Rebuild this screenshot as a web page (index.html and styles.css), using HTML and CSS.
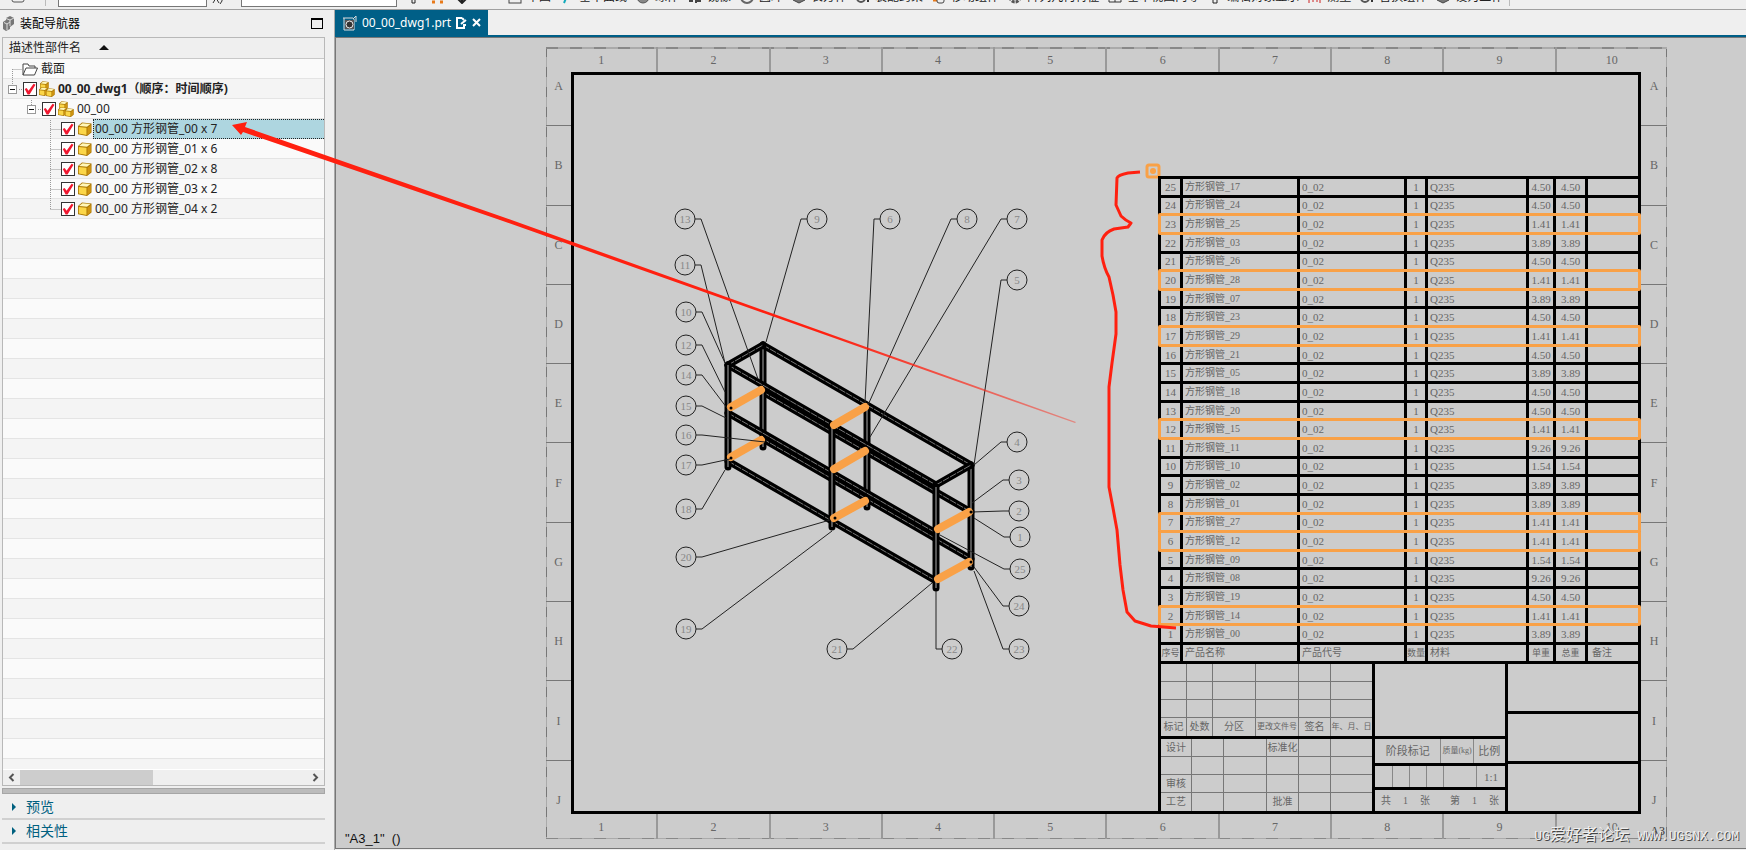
FILE: index.html
```html
<!DOCTYPE html>
<html lang="zh-CN">
<head>
    <meta charset="UTF-8">
    <meta name="viewport" content="width=device-width, initial-scale=1.0">
    <title>00_00_dwg1.prt</title>
    <link rel="stylesheet" href="styles.css">
</head>
<body>
    <svg width="0" height="0" class="defs">
        <defs>
            <symbol id="cube" viewBox="0 0 14 14">
                <path d="M0 4 4 0.500l9.500 1v9l-4.500 3.500-9-1.700z" fill="#a87400"/>
                <path d="M1 4 4.500 1.200l8 .9-3.500 2.700z" fill="#fff6b8"/>
                <path d="M.8 4.900 8.500 5.700v7.300l-7.700-1.400z" fill="#fbd648"/>
                <path d="M9.400 5.700 12.900 3v7l-3.500 2.900z" fill="#cf9410"/>
            </symbol>
            <symbol id="asm" viewBox="0 0 16 16">
                <use href="#cube" x="1" y="0" width="9" height="9"/>
                <use href="#cube" x="0" y="6" width="9" height="9"/>
                <use href="#cube" x="7" y="7" width="9" height="9"/>
            </symbol>
        </defs>
    </svg>

    <div class="toolbar">
        <svg class="tool-icon first" viewBox="0 0 14 14"><rect x="1" y="1" width="12" height="12" rx="2" fill="none" stroke="#555"/></svg>
        <span class="sep"></span>
        <select class="filter" aria-label="类型过滤器"><option></option></select>
        <svg class="tool-icon" viewBox="0 0 14 14"><path d="M1 13 4 8l3 5M10 8v3l-2 3" fill="none" stroke="#333"/></svg>
        <select class="scope" aria-label="选择范围"><option>整个装配</option></select>
        <svg class="tool-icon" viewBox="0 0 14 14"><path d="M5 2v11h3V2" fill="none" stroke="#222"/></svg>
        <svg class="tool-icon" viewBox="0 0 14 14"><path d="M1 12h3M9 12h3" stroke="#e87a1a" stroke-width="3"/></svg>
        <svg class="tool-icon" viewBox="0 0 14 14"><path d="M7 2v11M3 9l4 4 4-4" fill="none" stroke="#222" stroke-width="2"/></svg>
        <div class="tools" id="tools"></div>
        <span class="sep"></span>
    </div>

    <div class="main">
        <aside class="navigator">
            <div class="nav-title">
                <svg width="13" height="15" viewBox="0 0 13 15"><path d="M1 6 4 4V2l4-2 4 2v6l-4 3v2l-4 2-3-2z" fill="#777"/><path d="M2 6.500 5 8l3-2M5 8v6M4 2.500 8 4l4-2M8 4v6" fill="none" stroke="#ddd"/></svg>
                <span>装配导航器</span>
                <button class="maximize" aria-label="最大化"></button>
            </div>
            <div class="tree">
                <div class="tree-head">描述性部件名 <i class="sort"></i></div>
                <div class="rows">
                    <svg class="branches" width="70" height="160">
                        <path d="M9.500 10v15M9.500 10.500H19M16 30.500h4M28.500 41v5M35 50.500h4M47.500 61v90M47.500 70.500H58M47.500 90.500H58M47.500 110.500H58M47.500 130.500H58M47.500 150.500H58"/>
                    </svg>
                    <div class="row folder">
                        <svg width="16" height="13" viewBox="0 0 16 13"><path d="M1 12V1h5l1 2h6v2M1 12l3-7h11.500l-3 7z" fill="#fff" stroke="#444"/></svg>
                        <span class="label">截面</span>
                    </div>
                    <div class="row level1">
                        <button class="expander" aria-label="折叠"></button>
                        <input type="checkbox" id="p0" checked>
                        <svg width="16" height="16"><use href="#asm"/></svg>
                        <label class="label" for="p0"><b>00_00_dwg1（顺序：时间顺序)</b></label>
                    </div>
                    <div class="row level2">
                        <button class="expander" aria-label="折叠"></button>
                        <input type="checkbox" id="p1" checked>
                        <svg width="16" height="16"><use href="#asm"/></svg>
                        <label class="label" for="p1">00_00</label>
                    </div>
                    <div class="row level3 selected">
                        <input type="checkbox" id="p2" checked>
                        <svg width="14" height="14"><use href="#cube"/></svg>
                        <label class="label" for="p2">00_00 方形钢管_00 x 7</label>
                    </div>
                    <div class="row level3">
                        <input type="checkbox" id="p3" checked>
                        <svg width="14" height="14"><use href="#cube"/></svg>
                        <label class="label" for="p3">00_00 方形钢管_01 x 6</label>
                    </div>
                    <div class="row level3">
                        <input type="checkbox" id="p4" checked>
                        <svg width="14" height="14"><use href="#cube"/></svg>
                        <label class="label" for="p4">00_00 方形钢管_02 x 8</label>
                    </div>
                    <div class="row level3">
                        <input type="checkbox" id="p5" checked>
                        <svg width="14" height="14"><use href="#cube"/></svg>
                        <label class="label" for="p5">00_00 方形钢管_03 x 2</label>
                    </div>
                    <div class="row level3">
                        <input type="checkbox" id="p6" checked>
                        <svg width="14" height="14"><use href="#cube"/></svg>
                        <label class="label" for="p6">00_00 方形钢管_04 x 2</label>
                    </div>
                </div>
                <div class="scrollbar">
                    <svg width="17" height="15" viewBox="0 0 17 15"><path d="M10.500 4 7 7.500l3.500 3.500" fill="none" stroke="#555" stroke-width="2"/></svg>
                    <div class="track"><div class="thumb"></div></div>
                    <svg width="17" height="15" viewBox="0 0 17 15"><path d="M6.500 4 10 7.500 6.500 11" fill="none" stroke="#555" stroke-width="2"/></svg>
                </div>
            </div>
            <div class="splitter"></div>
            <button class="section">预览</button>
            <button class="section">相关性</button>
        </aside>

        <section class="workspace">
            <div class="tabs">
                <div class="tab">
                    <svg width="15" height="16" viewBox="0 0 15 16"><path d="M1 3h10M2 3v12h10V4M11 4l3-3v6" fill="none" stroke="#ddd"/><rect x="3" y="5" width="9" height="9" fill="#555"/><circle cx="7.500" cy="9.500" r="3.500" fill="#333" stroke="#eee"/></svg>
                    <span>00_00_dwg1.prt</span>
                    <svg width="11" height="12" viewBox="0 0 11 12"><path d="M6 1H1v10h7V8M6 1l2 2M5 7l5-4M7 8h3" fill="none" stroke="#fff" stroke-width="2"/></svg>
                    <button class="close" aria-label="关闭"><svg width="9" height="9" viewBox="0 0 9 9"><path d="M1 1l7 7M8 1 1 8" stroke="#fff" stroke-width="2"/></svg></button>
                </div>
            </div>
            <div class="canvas">
                <div class="sheet">
                    <div class="ruler-h"><span>1</span><span>2</span><span>3</span><span>4</span><span>5</span><span>6</span><span>7</span><span>8</span><span>9</span><span>10</span></div>
                    <div class="sheet-body">
                        <div class="ruler-v"><span>A</span><span>B</span><span>C</span><span>D</span><span>E</span><span>F</span><span>G</span><span>H</span><span>I</span><span>J</span></div>
                        <div class="frame">
                            <svg class="model" width="584" height="736" viewBox="574 74 584 736">
                                <g id="rails"></g>
                                <g class="cross">
                                    <path d="M731 406 761 389M731 456 761 439M834 424 865 406M834 468 865 450M834 517 865 500M938 528 969 511M938 578 969 561"/>
                                </g>
                                <g class="pins">
                                    <circle cx="731" cy="407" r="1.500"/><circle cx="731" cy="457" r="1.500"/><circle cx="835" cy="517" r="1.500"/><circle cx="971" cy="511" r="1.500"/><circle cx="971" cy="561" r="1.500"/>
                                </g>
                                <g id="balloons"></g>
                                <rect class="anchor" x="1147" y="164" width="12" height="12" rx="2"/>
                                <circle cx="1153" cy="170" r="3" fill="#f9a147"/>
                            </svg>
                            <div class="tables">
                                <table class="bom">
                                    <colgroup><col class="c1"><col class="c2"><col class="c3"><col class="c4"><col class="c5"><col class="c6"><col class="c7"><col></colgroup>
                                    <tbody id="bom">
                                        <tr><th>序号</th><th class="name">产品名称</th><th class="code">产品代号</th><th>数量</th><th class="mat">材料</th><th>单重</th><th>总重</th><th class="note">备注</th></tr>
                                    </tbody>
                                </table>
                                <div class="title-block">
                                    <div class="tb-left">
                                        <div class="grid changes">
                                            <i></i><i></i><i></i><i></i><i></i><i></i>
                                            <i></i><i></i><i></i><i></i><i></i><i></i>
                                            <i></i><i></i><i></i><i></i><i></i><i></i>
                                            <span>标记</span><span>处数</span><span>分区</span><span class="small">更改文件号</span><span>签名</span><span class="small">年、月、日</span>
                                        </div>
                                        <div class="grid signs">
                                            <span>设计</span><i></i><i></i><span>标准化</span><i></i><i></i>
                                            <i></i><i></i><i></i><i></i><i></i><i></i>
                                            <span>审核</span><i></i><i></i><i></i><i></i><i></i>
                                            <span>工艺</span><i></i><i></i><span>批准</span><i></i><i></i>
                                        </div>
                                    </div>
                                    <div class="tb-mid">
                                        <div class="blank"></div>
                                        <div class="stage"><span>阶段标记</span><span class="small">质量(kg)</span><span>比例</span></div>
                                        <div class="scale"><i></i><i></i><i></i><i></i><i class="wide"></i><span>1:1</span></div>
                                        <div class="pages"><span>共</span><span>1</span><span>张</span><span class="gap">第</span><span>1</span><span>张</span></div>
                                    </div>
                                    <div class="tb-right"><div></div><div></div><div></div></div>
                                </div>
                            </div>
                        </div>
                        <div class="ruler-v right"><span>A</span><span>B</span><span>C</span><span>D</span><span>E</span><span>F</span><span>G</span><span>H</span><span>I</span><span>J</span></div>
                    </div>
                    <div class="ruler-h bottom"><span>1</span><span>2</span><span>3</span><span>4</span><span>5</span><span>6</span><span>7</span><span>8</span><span>9</span><span>10</span></div>
                    <span class="format">A3</span>
                </div>
                <span class="sheet-name">"A3_1"&nbsp; ()</span>
                <span class="watermark">UG<b>爱好者论坛</b> WWW.UGSNX.COM</span>
            </div>
        </section>
    </div>

    <!-- red marks over the whole window -->
    <svg class="marks" width="1200" height="650">
        <defs>
            <linearGradient id="fade" gradientUnits="userSpaceOnUse" x1="232" y1="0" x2="1075" y2="0">
                <stop offset="0.700" stop-color="#ff2010"/>
                <stop offset="1" stop-color="#ff2010" stop-opacity="0.400"/>
            </linearGradient>
        </defs>
        <path d="M232 125 247 122 245 127 500 216 1076 422 1075 423 500 220 243 132 241 135z" fill="url(#fade)"/>
        <path d="M1140 172 1128 173Q1118 175 1117 178L1116 205 1121 216Q1125 220 1131 223L1128 227 1114 229Q1105 232 1102 240V256Q1104 268 1109 277L1113 295 1116 312V334L1112 363 1109 387V487L1113 508 1117 530 1120 565 1123 590 1127 612 1135 621 1151 626 1176 628" fill="none" stroke="#ff2010" stroke-width="3" stroke-linejoin="round"/>
    </svg>

    <script>
        // toolbar
        var icons = {
            box: '<rect x="1" y="1" width="12" height="12" fill="none" stroke="#444"/>',
            line: '<path d="M4 13 9 1" stroke="#1ab" stroke-width="2"/>',
            ball: '<circle cx="7" cy="7" r="6" fill="#888" stroke="#555"/>',
            ring: '<circle cx="7" cy="7" r="6" fill="none" stroke="#666" stroke-width="2"/>',
            key: '<path d="M1 11h4M8 13V6h4v5H8" fill="none" stroke="#444" stroke-width="2"/>',
            gear: '<circle cx="7" cy="7" r="5" fill="none" stroke="#555" stroke-width="3" stroke-dasharray="3 1"/>',
            cube: '<path d="M1 3 7 0l6 3v7l-6 3-6-3z" fill="#777" stroke="#444"/>',
            chain: '<circle cx="5" cy="8" r="4" fill="none" stroke="#555" stroke-width="2"/><path d="M12 8v4" stroke="#333" stroke-width="2"/>',
            hand: '<path d="M1 10h4" stroke="#e87a1a" stroke-width="3"/><rect x="5" y="4" width="7" height="9" rx="2" fill="none" stroke="#444"/>',
            grid: '<path d="M1 1h12v11H1zM7 1v11" fill="none" stroke="#333"/>',
            up: '<path d="M7 1l5 7H9v5H5V8H2z" fill="none" stroke="#222"/>',
            dim: '<path d="M1 1v12M12 1v12M5 8v4M9 8v4" stroke="#c22"/>'
        };
        var tools = [
            ['box', '草图'], ['line', '基本曲线'], ['ball', '球体'], ['key', '镜像'], ['ring', '圆环'],
            ['cube', '长方体'], ['chain', '装配约束'], ['hand', '移动组件'], ['gear', '阵列几何特征'],
            ['grid', '基本视图向导'], ['up', '编辑对象显示'], ['dim', '测量'], ['chain', '替换组件'], ['cube', '设为工作']
        ];
        document.getElementById('tools').innerHTML = tools.map(function (t) {
            return '<button><svg width="14" height="14">' + icons[t[0]] + '</svg>' + t[1] + '</button>';
        }).join('');

        // parts list: number, suffix, weight
        var parts = [
            [25, '17', '4.50'], [24, '24', '4.50'], [23, '25', '1.41'], [22, '03', '3.89'], [21, '26', '4.50'],
            [20, '28', '1.41'], [19, '07', '3.89'], [18, '23', '4.50'], [17, '29', '1.41'], [16, '21', '4.50'],
            [15, '05', '3.89'], [14, '18', '4.50'], [13, '20', '4.50'], [12, '15', '1.41'], [11, '11', '9.26'],
            [10, '10', '1.54'], [9, '02', '3.89'], [8, '01', '3.89'], [7, '27', '1.41'], [6, '12', '1.41'],
            [5, '09', '1.54'], [4, '08', '9.26'], [3, '19', '4.50'], [2, '14', '1.41'], [1, '00', '3.89']
        ];
        document.getElementById('bom').insertAdjacentHTML('afterbegin', parts.map(function (p) {
            return '<tr' + (p[2] === '1.41' ? ' class="hit"' : '') + '><td>' + p[0] + '</td><td class="name">方形钢管_' + p[1] +
                '</td><td class="code">0_02</td><td>1</td><td class="mat">Q235</td><td>' + p[2] + '</td><td>' + p[2] + '</td><td></td></tr>';
        }).join(''));

        // square tubes of the rack, back to front
        var rails = [
            'M763 391 971 511', 'M763 438 971 558', 'M763 344V446', 'M867 405V506', 'M971 466V566',
            'M763 344 971 464', 'M728 412 936 532', 'M728 460 936 580', 'M728 364 936 484',
            'M728 364 763 344', 'M936 484 971 464', 'M728 364V466', 'M832 424V526', 'M936 486V587'
        ];
        document.getElementById('rails').innerHTML = rails.map(function (d) {
            return '<path class="tube" d="' + d + '"/><path class="' + (d.indexOf('V') > 0 ? 'face' : 'shine') + '" d="' + d + '"/>';
        }).join('');

        // balloons: number, centre, leader end, leader side
        var balloons = [
            [13, 685, 218, 758, 378, 1], [11, 685, 264, 725, 362, 1], [10, 686, 311, 725, 362, 1], [12, 686, 344, 725, 391, 1],
            [14, 686, 374, 727, 407, 1], [15, 686, 405, 726, 417, 1], [16, 686, 434, 765, 441, 1], [17, 686, 464, 730, 458, 1],
            [18, 686, 508, 725, 469, 1], [20, 686, 556, 830, 519, 1], [19, 686, 628, 832, 530, 1], [21, 837, 648, 932, 582, 1],
            [9, 817, 218, 766, 341, -1], [6, 890, 218, 865, 402, -1], [8, 967, 218, 868, 404, -1], [7, 1017, 218, 870, 436, -1],
            [5, 1017, 279, 974, 464, -1], [4, 1017, 441, 974, 464, -1], [3, 1019, 479, 972, 502, -1], [2, 1019, 510, 972, 511, -1],
            [1, 1020, 536, 974, 517, -1], [25, 1020, 568, 940, 534, -1], [24, 1019, 605, 974, 566, -1], [23, 1019, 648, 974, 570, -1],
            [22, 952, 648, 936, 590, -1]
        ];
        document.getElementById('balloons').innerHTML = balloons.map(function (b) {
            return '<circle cx="' + b[1] + '" cy="' + b[2] + '" r="10"/><path d="M' + (b[1] + 10 * b[5]) + ' ' + b[2] +
                'H' + (b[1] + 16 * b[5]) + 'L' + b[3] + ' ' + b[4] + '"/><text x="' + b[1] + '" y="' + (b[2] + 4) + '">' + b[0] + '</text>';
        }).join('');
    </script>
</body>
</html>
```
FILE: styles.css
```css
* {
    box-sizing: border-box;
}
body {
    margin: 0;
    height: 100vh;
    display: flex;
    flex-direction: column;
    position: relative;
    overflow: hidden;
    background: #efefef;
    color: #222;
    font: 12px/16px "Noto Sans", "Noto Sans CJK SC", sans-serif;
}
button {
    font: inherit;
    color: inherit;
    background: none;
    border: none;
    padding: 0;
}
.defs {
    position: absolute;
}

/* toolbar, scrolled up so that only its lower edge shows */
.toolbar {
    flex: none;
    height: 10px;
    overflow: hidden;
    border-bottom: 1px solid #a0a0a0;
    display: flex;
    align-items: flex-end;
}
.tool-icon {
    flex: none;
    width: 14px;
    height: 14px;
    margin: 0 5px 5px 5px;
}
.tool-icon.first {
    margin: 0 14px 6px 11px;
}
.sep {
    flex: none;
    width: 1px;
    height: 20px;
    margin: 0 6px 3px 6px;
    background: #bbb;
}
.toolbar select {
    flex: none;
    height: 24px;
    margin-bottom: 2px;
    border: 1px solid #777;
    background: #fff;
    appearance: none;
    font: inherit;
    color: #222;
    padding: 0 2px;
}
.filter {
    width: 149px;
    margin-left: 6px;
}
.scope {
    width: 156px;
    margin: 0 5px 0 10px;
}
.tools {
    display: flex;
    gap: 9px;
    margin-left: 34px;
}
.tools button {
    display: flex;
    align-items: center;
    gap: 5px;
    white-space: nowrap;
    margin-bottom: 4px;
}

.main {
    flex: 1;
    min-height: 0;
    display: flex;
}

/* assembly navigator */
.navigator {
    flex: none;
    width: 334px;
    padding: 0 9px 6px 2px;
    display: flex;
    flex-direction: column;
}
.nav-title {
    height: 27px;
    display: flex;
    align-items: center;
    gap: 5px;
    color: #000;
}
.maximize {
    width: 12px;
    height: 11px;
    border: 1px solid #000;
    border-top-width: 2px;
    margin: 0 2px 0 auto;
}
.tree {
    flex: 1;
    min-height: 0;
    border: 1px solid #b8b8b8;
    display: flex;
    flex-direction: column;
}
.tree-head {
    height: 21px;
    border-bottom: 1px solid #c8c8c8;
    padding-left: 6px;
    line-height: 20px;
}
.sort {
    display: inline-block;
    margin-left: 15px;
    border: 5px solid transparent;
    border-top: none;
    border-bottom-color: #111;
    vertical-align: 2px;
}
.rows {
    flex: 1;
    min-height: 0;
    position: relative;
    overflow: hidden;
    background: repeating-linear-gradient(#fafafa 0 19px, #e4e4e4 19px 20px, #f4f4f4 20px 39px, #e4e4e4 39px 40px);
}
.branches {
    position: absolute;
    left: 0;
    top: 0;
}
.branches path {
    fill: none;
    stroke: #999;
    stroke-dasharray: 1 1;
}
.row {
    position: relative;
    height: 20px;
    display: flex;
    align-items: center;
    gap: 2px;
}
.row svg {
    flex: none;
}
.label {
    flex: 1;
    padding-left: 1px;
    white-space: nowrap;
}
.folder {
    padding-left: 19px;
}
.level1 {
    padding-left: 5px;
}
.level2 {
    padding-left: 24px;
}
.level3 {
    padding-left: 58px;
}
.level3 svg {
    margin-left: 1px;
}
.level3 .label {
    line-height: 18px;
    border: 1px dotted transparent;
    border-width: 1px 0 1px 1px;
    margin-left: -1px;
}
.selected .label {
    background: #aed6e0;
    border-color: #222;
}
.expander {
    width: 9px;
    height: 9px;
    margin-right: 4px;
    border: 1px solid #999;
    background: linear-gradient(#111, #111) center / 5px 1px no-repeat #fff;
}
.row input {
    appearance: none;
    flex: none;
    width: 14px;
    height: 14px;
    margin: 0;
    border: 1px solid #333;
    background: #fff;
}
.row input:checked::before {
    content: "";
    display: block;
    width: 12px;
    height: 12px;
    background: #f01830;
    clip-path: polygon(6% 50%, 22% 42%, 38% 64%, 80% 6%, 96% 14%, 46% 96%, 30% 96%);
}
.scrollbar {
    flex: none;
    height: 16px;
    display: flex;
    border-top: 1px solid #fff;
}
.track {
    flex: 1;
}
.thumb {
    width: 133px;
    height: 15px;
    background: #cdcdcd;
}
.splitter {
    height: 6px;
    margin: 2px 0;
    background: #bcbcbc;
    border: 1px solid #a6a6a6;
}
.section {
    height: 24px;
    border-bottom: 2px solid #d0d0d0;
    color: #00607f;
    font-size: 14px;
    display: flex;
    align-items: center;
    gap: 10px;
    padding-left: 10px;
}
.section::before {
    content: "";
    border: 4px solid transparent;
    border-left: 4px solid #00607f;
    border-right: none;
}

/* work area */
.workspace {
    flex: 1;
    min-width: 0;
    display: flex;
    flex-direction: column;
    border-left: 1px solid #aaa;
}
.tabs {
    height: 27px;
    border-bottom: 2px solid #005f87;
    display: flex;
}
.tab {
    height: 25px;
    display: flex;
    align-items: center;
    gap: 5px;
    padding: 0 7px 0 7px;
    background: #005f87;
    color: #fff;
}
.close {
    display: flex;
}
.canvas {
    flex: 1;
    position: relative;
    overflow: hidden;
    background: #ccc;
    border: 1px solid #777;
    border-right: none;
    margin-bottom: 1px;
    padding: 9px 0 0 210px;
}
.sheet {
    position: relative;
    width: 1121px;
    font-family: "Liberation Serif", "Noto Sans CJK SC", serif;
    color: #666;
    background:
        repeating-linear-gradient(90deg, #888 0 12px, #aaa 12px 24px) top / 100% 2px no-repeat,
        repeating-linear-gradient(90deg, #888 0 12px, #aaa 12px 24px) bottom / 100% 1px no-repeat,
        repeating-linear-gradient(#777 0 10px, #aaa 10px 20px) left / 1px 100% no-repeat,
        repeating-linear-gradient(#777 0 10px, #aaa 10px 20px) right / 1px 100% no-repeat;
}
.ruler-h {
    display: flex;
    height: 25px;
}
.ruler-h span {
    flex: 1;
    text-align: center;
    line-height: 26px;
}
.ruler-h span + span {
    border-left: 2px solid #999;
}
.sheet-body {
    display: flex;
}
.ruler-v {
    width: 25px;
    margin: -25px 0;
    display: flex;
    flex-direction: column;
}
.ruler-v.right {
    width: 26px;
}
.ruler-v span {
    flex: 1;
    display: flex;
    align-items: center;
    justify-content: center;
}
.ruler-v span + span {
    border-top: 1px solid #777;
}
.frame {
    flex: 1;
    border: 3px solid #000;
    display: flex;
}
.format {
    position: absolute;
    right: 2px;
    bottom: 0;
    color: #333;
}

/* rack drawing */
.model {
    flex: none;
    overflow: visible;
}
.tube {
    fill: none;
    stroke: #000;
    stroke-width: 7;
    stroke-linecap: round;
}
.shine {
    fill: none;
    stroke: #777;
    stroke-width: 1;
    stroke-dasharray: 7 1;
}
.face {
    fill: none;
    stroke: #555;
    stroke-width: 2;
}
.cross path {
    fill: none;
    stroke: #f9a147;
    stroke-width: 8;
    stroke-linecap: round;
}
#balloons circle,
#balloons path {
    fill: none;
    stroke: #222;
    stroke-width: 1;
}
#balloons text {
    fill: #888;
    font-size: 11px;
    text-anchor: middle;
}
.anchor {
    fill: none;
    stroke: #f9a147;
    stroke-width: 3;
}

/* parts list */
.tables {
    flex: 1;
    margin-top: auto;
}
.bom {
    width: 100%;
    height: 485px;
    table-layout: fixed;
    border-spacing: 0;
    font-size: 11px;
    line-height: 12px;
}
.bom tr {
    height: 18px;
}
.c1 { width: 22px; }
.c2 { width: 117px; }
.c3 { width: 107px; }
.c4 { width: 21px; }
.c5 { width: 101px; }
.c6 { width: 27px; }
.c7 { width: 32px; }
.bom td,
.bom th {
    padding: 0;
    border: 3px solid #000;
    border-width: 3px 0 0 3px;
    text-align: center;
    font-weight: normal;
    white-space: nowrap;
}
.bom th {
    font-size: 9px;
}
.bom .name,
.bom .code,
.bom .mat,
.bom .note {
    text-align: left;
    padding-left: 2px;
}
.bom td.name,
.bom th.name,
.bom th.code,
.bom th.mat,
.bom th.note {
    font-size: 10px;
}
.bom .note {
    padding-left: 4px;
}
.hit {
    position: relative;
}
.hit td:first-child::after {
    content: "";
    position: absolute;
    z-index: 1;
    inset: 0 -3px -3px 0;
    border: 3px solid #f9a147;
    border-radius: 2px;
}

/* title block */
.title-block {
    display: flex;
    height: 150px;
    border: 3px solid #000;
    border-width: 3px 0 0 3px;
    font-size: 10px;
    line-height: 12px;
}
.title-block span {
    display: flex;
    align-items: center;
    justify-content: center;
    white-space: nowrap;
}
.title-block .small {
    font-size: 8px;
}
.tb-left {
    width: 211px;
    display: flex;
    flex-direction: column;
}
.grid {
    flex: 1;
    display: grid;
    grid-auto-rows: 1fr;
    overflow: hidden;
}
.grid > * {
    border: 1px solid #777;
    border-width: 0 1px 1px 0;
    min-width: 0;
}
.grid > :nth-child(6n) {
    border-right: none;
}
.grid > :nth-last-child(-n+6) {
    border-bottom: none;
}
.changes {
    grid-template-columns: 26px 26px 43px 43px 32px 1fr;
    border-bottom: 3px solid #000;
}
.signs {
    grid-template-columns: 31px 32px 43px 32px 32px 1fr;
}
.tb-mid {
    width: 136px;
    border: 3px solid #000;
    border-width: 0 3px;
    display: flex;
    flex-direction: column;
}
.blank {
    height: 72px;
}
.stage,
.scale,
.pages {
    height: 24px;
    border-top: 3px solid #000;
    display: flex;
}
.stage {
    height: 27px;
}
.stage > * + *,
.scale > * + * {
    border-left: 1px solid #888;
}
.stage span {
    width: 33px;
    font-size: 11px;
}
.stage span:first-child {
    width: 67px;
}
.scale i {
    width: 17px;
}
.scale .wide {
    width: 33px;
}
.scale span {
    flex: 1;
    font-size: 11px;
}
.pages {
    align-items: center;
    justify-content: center;
    gap: 12px;
}
.pages .gap {
    margin-left: 8px;
}
.tb-right {
    flex: 1;
    display: flex;
    flex-direction: column;
}
.tb-right div {
    flex: 1;
}
.tb-right div + div {
    border-top: 3px solid #000;
}

.sheet-name {
    position: absolute;
    left: 9px;
    bottom: 1px;
    font: 13px/16px "Liberation Sans", Arial, sans-serif;
    color: #111;
}
.watermark {
    position: absolute;
    right: 7px;
    bottom: 1px;
    font: 13px/20px "Liberation Mono", "Noto Sans CJK SC", monospace;
    color: #eee;
    text-shadow: 1px 1px 0 #444;
}
.watermark b {
    font-size: 16px;
    font-weight: normal;
}
.marks {
    position: absolute;
    left: 0;
    top: 0;
    z-index: 2;
    pointer-events: none;
}
```
